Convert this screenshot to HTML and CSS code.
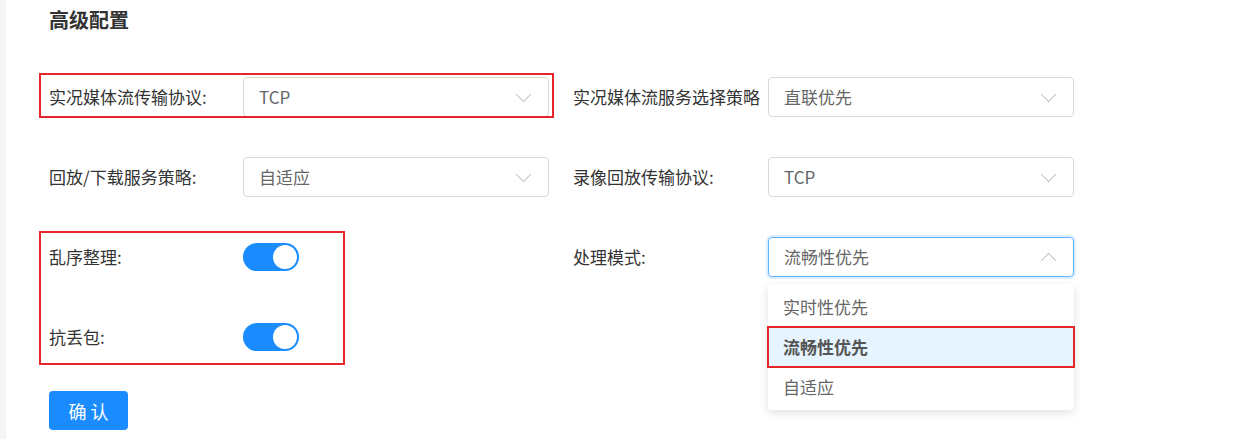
FILE: index.html
```html
<!DOCTYPE html>
<html lang="zh-CN">

<head>
    <meta charset="UTF-8">
    <meta name="viewport" content="width=device-width, initial-scale=1.0">
    <title>高级配置</title>
    <link rel="stylesheet" href="styles.css">
</head>

<body>
    <div class="page">
        <h2 class="section-title">高级配置</h2>

        <div class="form-grid">
            <!-- Row 1 -->
            <div class="form-item marked-row">
                <label class="form-label">实况媒体流传输协议:</label>
                <div class="select">
                    <span class="select-value">TCP</span>
                    <span class="chevron"></span>
                </div>
            </div>
            <div class="form-item">
                <label class="form-label">实况媒体流服务选择策略</label>
                <div class="select">
                    <span class="select-value">直联优先</span>
                    <span class="chevron"></span>
                </div>
            </div>

            <!-- Row 2 -->
            <div class="form-item">
                <label class="form-label">回放/下载服务策略:</label>
                <div class="select">
                    <span class="select-value">自适应</span>
                    <span class="chevron"></span>
                </div>
            </div>
            <div class="form-item">
                <label class="form-label">录像回放传输协议:</label>
                <div class="select">
                    <span class="select-value">TCP</span>
                    <span class="chevron"></span>
                </div>
            </div>

            <!-- Row 3 -->
            <div class="form-item marked-switches">
                <label class="form-label">乱序整理:</label>
                <div class="switch is-on"><span class="knob"></span></div>
            </div>
            <div class="form-item">
                <label class="form-label">处理模式:</label>
                <div class="select is-open">
                    <span class="select-value">流畅性优先</span>
                    <span class="chevron up"></span>
                    <ul class="dropdown">
                        <li class="option">实时性优先</li>
                        <li class="option is-selected">流畅性优先</li>
                        <li class="option">自适应</li>
                    </ul>
                </div>
            </div>

            <!-- Row 4 -->
            <div class="form-item">
                <label class="form-label">抗丢包:</label>
                <div class="switch is-on"><span class="knob"></span></div>
            </div>
            <div class="form-item"></div>
        </div>

        <button class="confirm-button">确 认</button>
    </div>
</body>

</html>
```

FILE: styles.css
```css
body {
    margin: 0;
    background: #fff;
    font-family: "Noto Sans CJK SC", "Noto Sans", sans-serif;
    color: #333;
}

.page {
    border-left: 6px solid #f4f5f6;
    padding: 0 0 0 43px;
    min-height: 439px;
    box-sizing: border-box;
}

.section-title {
    margin: 0;
    font-size: 20px;
    line-height: 40px;
    font-weight: bold;
    color: #333;
}

.form-grid {
    display: grid;
    grid-template-columns: 500px 501px;
    grid-auto-rows: 40px;
    column-gap: 24px;
    row-gap: 40px;
    margin-top: 37px;
}

.form-item {
    display: flex;
    align-items: center;
    position: relative;
}

.form-label {
    width: 194px;
    flex-shrink: 0;
    font-size: 17px;
    line-height: 24px;
    white-space: nowrap;
    color: #333;
}

.form-item:nth-child(even) .form-label {
    width: 195px;
}

.select {
    position: relative;
    width: 306px;
    height: 40px;
    box-sizing: border-box;
    border: 1px solid #d9d9d9;
    border-radius: 4px;
    display: flex;
    align-items: center;
    padding: 0 16px 0 15px;
    font-size: 17px;
    color: #666;
}

.select.is-open {
    border-color: #5cb3ff;
    box-shadow: 0 0 0 2px rgba(24, 144, 255, 0.15);
}

.select-value {
    flex: 1;
    line-height: 24px;
}

.chevron {
    width: 10px;
    height: 10px;
    border-right: 1px solid #c2c2c2;
    border-bottom: 1px solid #c2c2c2;
    transform: rotate(45deg);
    margin: -6px 3px 0 0;
}

.chevron.up {
    transform: rotate(225deg);
    margin: 6px 3px 0 0;
}

.dropdown {
    position: absolute;
    top: 46px;
    left: -1px;
    right: -1px;
    margin: 0;
    padding: 3px 0;
    list-style: none;
    background: #fff;
    border-radius: 4px;
    box-shadow: 0 3px 10px rgba(0, 0, 0, 0.12);
    z-index: 10;
}

.option {
    height: 40px;
    line-height: 40px;
    padding: 0 15px;
    font-size: 17px;
    color: #666;
}

.option.is-selected {
    background: #e6f4ff;
    font-weight: bold;
    color: #555;
    outline: 2px solid #e5262b;
    outline-offset: -1px;
}

.switch {
    width: 56px;
    height: 28px;
    border-radius: 14px;
    background: #ccc;
    position: relative;
}

.switch.is-on {
    background: #1a8cff;
}

.knob {
    position: absolute;
    top: 2px;
    right: 2px;
    width: 24px;
    height: 24px;
    border-radius: 50%;
    background: #fff;
}

/* red annotation frames */
.marked-row::after {
    content: "";
    position: absolute;
    top: -4px;
    bottom: -1px;
    left: -10px;
    right: -5px;
    border: 2px solid #e5262b;
    pointer-events: none;
}

.marked-switches::after {
    content: "";
    position: absolute;
    top: -6px;
    left: -10px;
    width: 306px;
    height: 134px;
    box-sizing: border-box;
    border: 2px solid #e5262b;
    pointer-events: none;
}

.confirm-button {
    margin-top: 34px;
    width: 79px;
    height: 39px;
    border: none;
    border-radius: 4px;
    background: #1a8cff;
    color: #fff;
    font-family: inherit;
    font-size: 18px;
    cursor: pointer;
}
```
